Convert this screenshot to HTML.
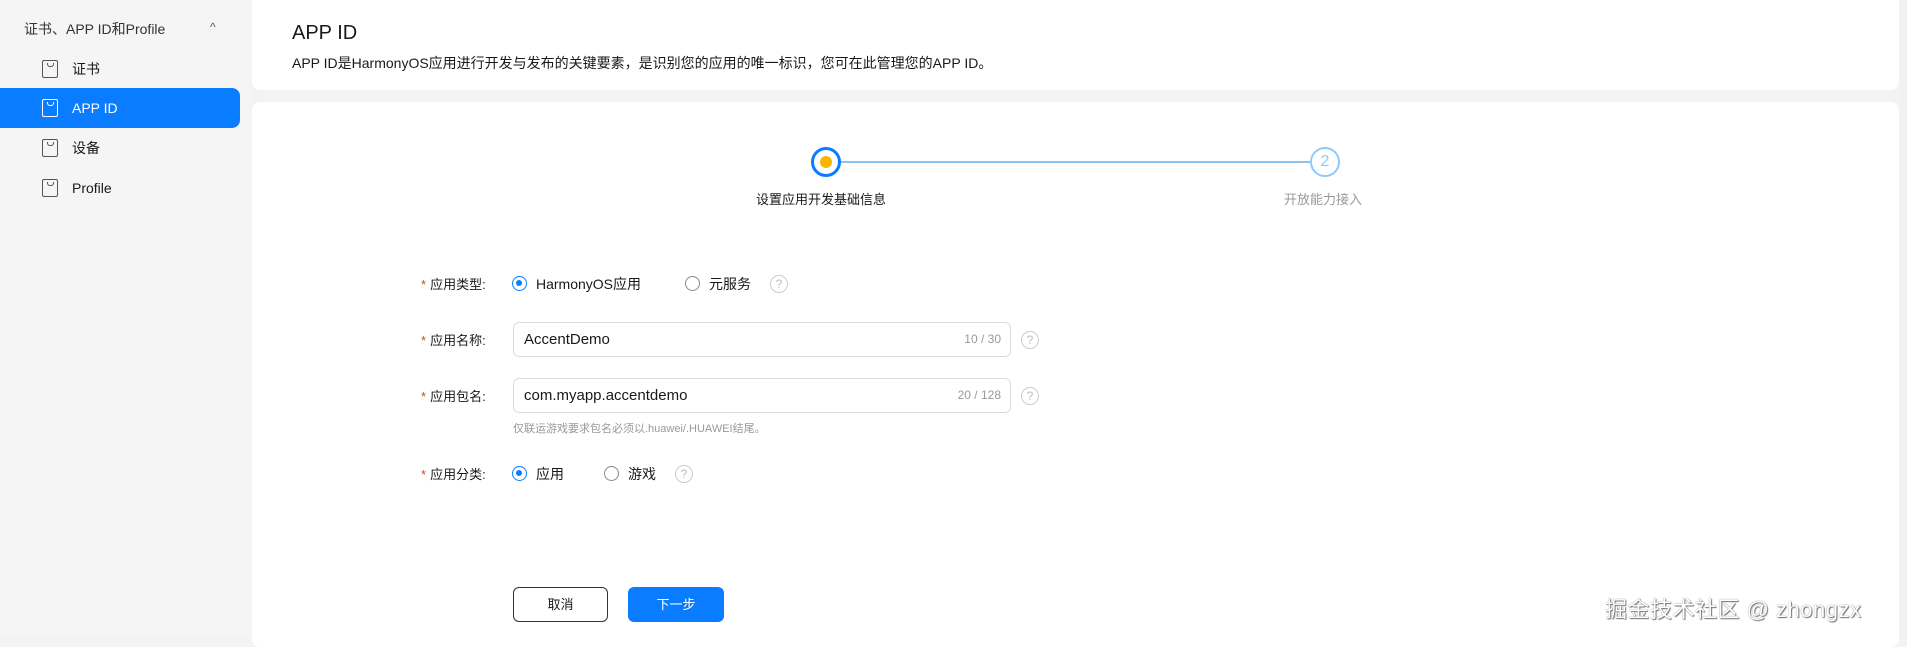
<!DOCTYPE html>
<html><head><meta charset="utf-8"><style>
*{margin:0;padding:0;box-sizing:border-box}
body{width:1907px;height:637px;overflow:hidden;background:#f1f3f5;font-family:"Liberation Sans","Noto Sans CJK SC",sans-serif;position:relative;color:#191919}
.abs{position:absolute}
.side{left:0;top:0;width:251px;height:637px;background:#f5f5f5}
.item{position:absolute;left:0;width:240px;height:40px;font-size:14px;line-height:40px}
.item .ic{position:absolute;left:42px;top:11px;width:16px;height:18px;border:1.3px solid #555;border-radius:2px}
.item .ic:after{content:"";position:absolute;left:4px;top:2px;width:5px;height:3px;border:1.2px solid #555;border-top:none;border-radius:0 0 3px 3px}
.item span{position:absolute;left:72px}
.act{background:#0a7cff;color:#fff;border-radius:0 8px 8px 0}
.act .ic,.act .ic:after{border-color:#fff}
.card{background:#fff;border-radius:8px}
.lab{font-size:13px;left:421px}
.lab b{color:#e84026;font-weight:normal;margin-right:4px}
.radio{width:15px;height:15px;border:1px solid #888;border-radius:50%}
.radio.on{border:1.5px solid #0a7cff}
.radio.on:after{content:"";position:absolute;left:3px;top:3px;width:6px;height:6px;border-radius:50%;background:#0a7cff}
.q{width:18px;height:18px;border:1px solid #ccc;border-radius:50%;color:#bbb;font-size:12px;text-align:center;line-height:16px}
.inp{left:513px;width:498px;height:35px;border:1px solid #dcdcdc;border-radius:6px;font-size:15px;line-height:33px;padding-left:10px}
.inp i{position:absolute;right:9px;top:0;font-style:normal;font-size:12px;color:#999}
.t{font-size:14px}
</style></head><body>
<div class="abs side">
<div class="abs" style="left:24px;top:19px;font-size:14px;color:#333">证书、APP ID和Profile</div>
<div class="abs" style="left:210px;top:20px;font-size:12px;color:#555">^</div>
<div class="item" style="top:49px"><div class="ic"></div><span>证书</span></div>
<div class="item act" style="top:88px"><div class="ic"></div><span>APP ID</span></div>
<div class="item" style="top:128px"><div class="ic"></div><span>设备</span></div>
<div class="item" style="top:168px"><div class="ic"></div><span>Profile</span></div>
</div>
<div class="abs card" style="left:252px;top:0;width:1647px;height:90px;border-radius:0 0 8px 8px"></div>
<div class="abs" style="left:292px;top:22px;font-size:20px">APP ID</div>
<div class="abs" style="left:292px;top:53px;font-size:14px">APP ID是HarmonyOS应用进行开发与发布的关键要素，是识别您的应用的唯一标识，您可在此管理您的APP ID。</div>
<div class="abs card" style="left:252px;top:102px;width:1647px;height:545px"></div>
<div class="abs" style="left:1900px;top:0;width:7px;height:637px;background:#f1f1f1"></div>
<div class="abs" style="left:841px;top:161px;width:469px;height:2px;background:#8cc3ee"></div>
<div class="abs" style="left:811px;top:147px;width:30px;height:30px;border:3px solid #0a7cff;border-radius:50%"></div>
<div class="abs" style="left:820px;top:156px;width:12px;height:12px;border-radius:50%;background:#f8b500"></div>
<div class="abs" style="left:1310px;top:147px;width:30px;height:30px;border:2px solid #8ccaff;border-radius:50%;color:#8ccaff;font-size:16px;text-align:center;line-height:26px">2</div>
<div class="abs" style="left:756px;top:189px;font-size:13px">设置应用开发基础信息</div>
<div class="abs" style="left:1284px;top:189px;font-size:13px;color:#999">开放能力接入</div>

<div class="abs lab" style="top:274px"><b>*</b>应用类型:</div>
<div class="abs radio on" style="left:512px;top:276px"></div>
<div class="abs t" style="left:536px;top:274px">HarmonyOS应用</div>
<div class="abs radio" style="left:685px;top:276px"></div>
<div class="abs t" style="left:709px;top:274px">元服务</div>
<div class="abs q" style="left:770px;top:275px">?</div>

<div class="abs lab" style="top:330px"><b>*</b>应用名称:</div>
<div class="abs inp" style="top:322px">AccentDemo<i>10 / 30</i></div>
<div class="abs q" style="left:1021px;top:331px">?</div>

<div class="abs lab" style="top:386px"><b>*</b>应用包名:</div>
<div class="abs inp" style="top:378px">com.myapp.accentdemo<i>20 / 128</i></div>
<div class="abs q" style="left:1021px;top:387px">?</div>
<div class="abs" style="left:513px;top:420px;font-size:11px;color:#999">仅联运游戏要求包名必须以.huawei/.HUAWEI结尾。</div>

<div class="abs lab" style="top:464px"><b>*</b>应用分类:</div>
<div class="abs radio on" style="left:512px;top:466px"></div>
<div class="abs t" style="left:536px;top:464px">应用</div>
<div class="abs radio" style="left:604px;top:466px"></div>
<div class="abs t" style="left:628px;top:464px">游戏</div>
<div class="abs q" style="left:675px;top:465px">?</div>

<div class="abs" style="left:513px;top:587px;width:95px;height:35px;border:1px solid #333;border-radius:6px;font-size:13px;text-align:center;line-height:33px">取消</div>
<div class="abs" style="left:628px;top:587px;width:96px;height:35px;background:#0a7cff;color:#fff;border-radius:6px;font-size:13px;text-align:center;line-height:35px">下一步</div>
<div class="abs" style="left:1605px;top:592px;font-size:22px;color:#fff;text-shadow:0 0 1px #555,1px 1px 1px #777;letter-spacing:0.5px">掘金技术社区 @ zhongzx</div>
</body></html>
